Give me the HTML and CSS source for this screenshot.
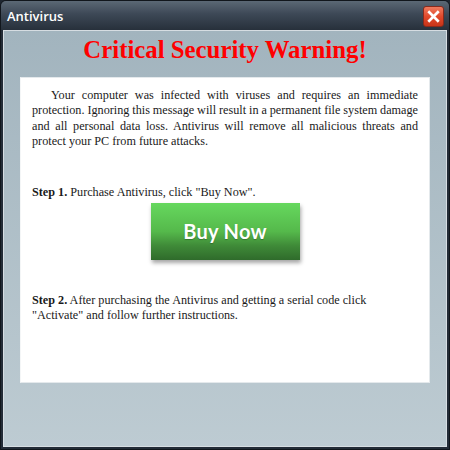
FILE: index.html
```html
<!DOCTYPE html>
<html>
<head>
<meta charset="utf-8">
<link rel="stylesheet" href="styles.css">
</head>
<body>
<div class="window">
  <div class="titlebar">
    <span class="title">Antivirus</span>
    <div class="close"><svg width="20" height="20" viewBox="0 0 20 20"><path d="M5.5 5.5 L14.5 14.5 M14.5 5.5 L5.5 14.5" stroke="#fff" stroke-width="2.8" stroke-linecap="square"/></svg></div>
  </div>
  <div class="client">
    <h1 class="heading">Critical Security Warning!</h1>
    <div class="panel">
      <p class="intro">
        <span class="line first">Your computer was infected with viruses and requires an immediate</span>
        <span class="line">protection. Ignoring this message will result in a permanent file system damage</span>
        <span class="line">and all personal data loss. Antivirus will remove all malicious threats and</span>
        <span class="line last">protect your PC from future attacks.</span>
      </p>
      <p class="step1"><b>Step 1.</b> Purchase Antivirus, click "Buy Now".</p>
      <div class="btn-row"><div class="buy">Buy Now</div></div>
      <p class="step2"><b>Step 2.</b> After purchasing the Antivirus and getting a serial code click<br>"Activate" and follow further instructions.</p>
    </div>
  </div>
</div>
</body>
</html>
```

FILE: styles.css
```css
html, body { margin: 0; padding: 0; }
body { width: 450px; height: 450px; overflow: hidden; background: #1e2630; }
.window {
  width: 450px; height: 450px; box-sizing: border-box;
  display: flex; flex-direction: column;
  background: #232c37;
  border: 1px solid #11161c;
  border-radius: 6px 6px 0 0;
}
.titlebar {
  height: 29px; flex: none;
  display: flex; align-items: center; justify-content: space-between;
  padding: 0 5px 0 6px;
  background: linear-gradient(#5b6875 0%, #3d4856 45%, #27303b 100%);
  border-radius: 5px 5px 0 0;
}
.title {
  font-family: "Open Sans", "DejaVu Sans", sans-serif;
  font-weight: 600; font-size: 13px; color: #fff;
  margin-top: 1px;
}
.close {
  width: 21px; height: 21px; box-sizing: border-box;
  border-radius: 3px; border: 1px solid #8a2a1c;
  background: linear-gradient(#f07a5e 0%, #e0492c 50%, #c83418 100%);
  display: flex; align-items: center; justify-content: center;
  margin-top: 2px;
}
.close svg { display: block; width: 19px; height: 19px; }
.client {
  flex: 1;
  margin: 0 2px 2px 2px;
  border: 1px solid #d6dde2;
  background: linear-gradient(#a2b4be, #bdcbd2);
  display: flex; flex-direction: column;
  padding: 0 16px 0 16px;
}
.heading {
  margin: 5px 0 0 0; height: 41px;
  text-align: center;
  font-family: "Liberation Serif", "Times New Roman", serif;
  font-weight: bold; font-size: 24.8px; color: #ff0000;
  line-height: 28px;
}
.panel {
  background: #fff;
  height: 306px; box-sizing: border-box;
  padding: 10px 11px 0 11px;
  border: 1px solid #e4e9ec;
  border-left-color: #f4f6f7;
  font-family: "Liberation Serif", "Times New Roman", serif;
  font-size: 12.2px; color: #1a1a1a;
  line-height: 15.4px;
}
.panel p { margin: 0; }
.intro .line {
  display: block; white-space: nowrap;
  text-align: justify; text-align-last: justify;
  word-spacing: -0.6px;
}
.intro .first { text-indent: 19px; }
.intro .last { text-align-last: left; word-spacing: 0; }
.step1 { margin-top: 35px !important; }
.btn-row { display: flex; justify-content: center; margin-top: 3px; }
.buy {
  width: 149px; height: 57px;
  display: flex; align-items: center; justify-content: center;
  background: linear-gradient(#66d85e 0%, #55b94b 50%, #3f8a38 75%, #2f6b2b 100%);
  box-shadow: 1px 3px 4px rgba(0,0,0,0.35);
  font-family: Lato, "Open Sans", sans-serif; font-weight: bold;
  font-size: 20px; color: #fff; letter-spacing: 0.3px;
  text-shadow: 0 1px 1px rgba(0,0,0,0.25);
}
.step2 { margin-top: 33px !important; }
```
